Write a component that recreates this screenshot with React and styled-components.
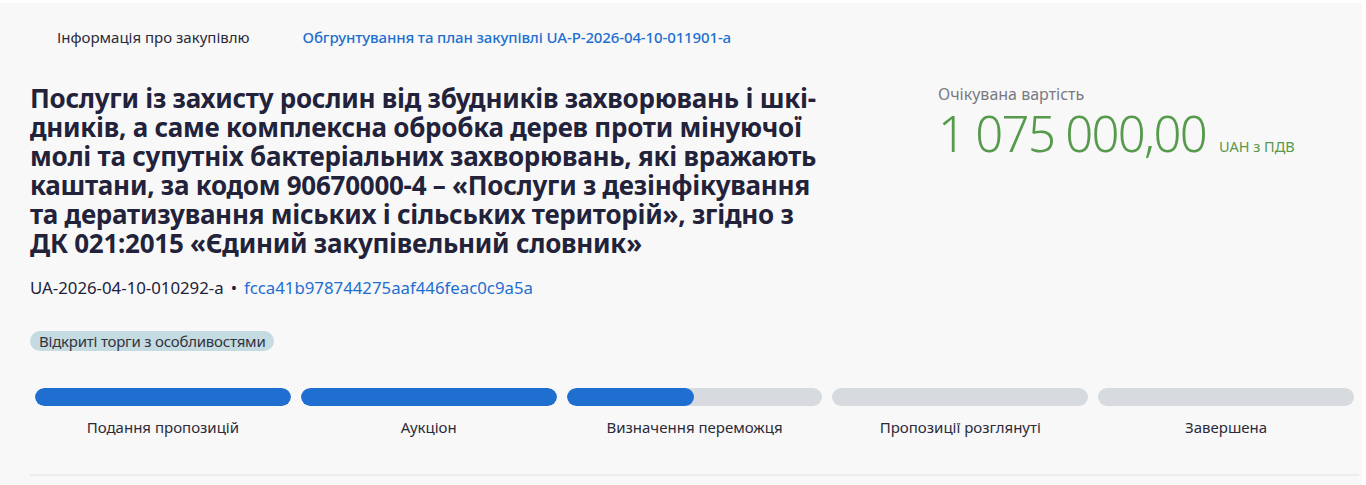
import React from "react";
import styled, { createGlobalStyle } from "styled-components";

const Global = createGlobalStyle`
  html, body { margin: 0; padding: 0; background: #ffffff; }
  body { font-family: "Noto Sans", "Open Sans", sans-serif; }
  * { box-sizing: border-box; }
`;

const Panel = styled.section`
  margin: 3px 4px 0 0;
  background: #f8f8f8;
  padding: 0 3px 0 30px;
  min-height: 482px;
`;

const Tabs = styled.nav`
  display: flex;
  align-items: center;
  height: 67px;
  padding-left: 27px;
  gap: 53px;
`;

const Tab = styled.a`
  font-size: 15px;
  text-decoration: none;
  color: ${(p) => (p.$link ? "#1e6fd0" : "#2b2b3a")};
  font-weight: ${(p) => (p.$link ? 500 : 400)};
  letter-spacing: ${(p) => (p.$link ? "-0.12px" : "0")};
  cursor: pointer;
`;

const Head = styled.div`
  display: flex;
  align-items: flex-start;
  padding-top: 14px;
`;

const Main = styled.div`
  flex: 0 0 908px;
`;

const Title = styled.h1`
  margin: 0;
  font-size: 26px;
  line-height: 29px;
  font-weight: 700;
  letter-spacing: -0.26px;
  color: #22223a;
`;

const Ids = styled.div`
  margin-top: 18px;
  font-size: 16.8px;
  color: #22223a;
  display: flex;
  gap: 7px;
  align-items: center;
`;

const Dot = styled.span`
  color: #22223a;
`;

const IdLink = styled.a`
  color: #1e6fd0;
  text-decoration: none;
`;

const Badge = styled.span`
  display: inline-block;
  margin-top: 32px;
  background: #c4dbe2;
  color: #333340;
  font-size: 15px;
  letter-spacing: -0.22px;
  line-height: 20px;
  padding: 0 8px 0 9px;
  border-radius: 10px;
`;

const Price = styled.div``;

const PriceLabel = styled.div`
  font-size: 16px;
  color: #7a7a82;
  line-height: 18px;
  margin-top: 1px;
`;

const PriceRow = styled.div`
  display: flex;
  align-items: baseline;
  gap: 13px;
  color: #569a4c;
  margin-top: 2px;
`;

const Amount = styled.span`
  font-size: 49px;
  font-weight: 300;
  letter-spacing: -1.7px;
  line-height: 56px;
`;

const Currency = styled.span`
  font-size: 14.5px;
`;

const Steps = styled.div`
  display: grid;
  grid-template-columns: repeat(5, 1fr);
  margin-top: 36px;
  padding-bottom: 37px;
  border-bottom: 2px solid #ececec;
`;

const Step = styled.div`
  padding: 0 5px;
  display: flex;
  flex-direction: column;
  align-items: center;
`;

const Bar = styled.div`
  width: 100%;
  height: 18px;
  border-radius: 9px;
  background: #d7dadf;
  overflow: hidden;
`;

const Fill = styled.div`
  height: 100%;
  background: #1f6fd1;
  border-radius: 9px;
`;

const StepLabel = styled.div`
  margin-top: 11px;
  font-size: 15px;
  color: #2b2b3a;
  line-height: 20px;
`;

const steps = [
  { label: "Подання пропозицій", fill: 100 },
  { label: "Аукціон", fill: 100 },
  { label: "Визначення переможця", fill: 50 },
  { label: "Пропозиції розглянуті", fill: 0 },
  { label: "Завершена", fill: 0 },
];

export default function App() {
  return (
    <>
      <Global />
      <Panel>
        <Tabs>
          <Tab>Інформація про закупівлю</Tab>
          <Tab $link>Обгрунтування та план закупівлі UA-P-2026-04-10-011901-a</Tab>
        </Tabs>
        <Head>
          <Main>
            <Title>
              Послуги із захисту рослин від збудників захворювань і шкі-
              <br />
              дників, а саме комплексна обробка дерев проти мінуючої
              <br />
              молі та супутніх бактеріальних захворювань, які вражають
              <br />
              каштани, за кодом 90670000-4 – «Послуги з дезінфікування
              <br />
              та дератизування міських і сільських територій», згідно з
              <br />
              ДК 021:2015 «Єдиний закупівельний словник»
            </Title>
            <Ids>
              <span>UA-2026-04-10-010292-a</span>
              <Dot>•</Dot>
              <IdLink>fcca41b978744275aaf446feac0c9a5a</IdLink>
            </Ids>
            <Badge>Відкриті торги з особливостями</Badge>
          </Main>
          <Price>
            <PriceLabel>Очікувана вартість</PriceLabel>
            <PriceRow>
              <Amount>1 075 000,00</Amount>
              <Currency>UAH з ПДВ</Currency>
            </PriceRow>
          </Price>
        </Head>
        <Steps>
          {steps.map((s) => (
            <Step key={s.label}>
              <Bar>
                <Fill style={{ width: `${s.fill}%` }} />
              </Bar>
              <StepLabel>{s.label}</StepLabel>
            </Step>
          ))}
        </Steps>
      </Panel>
    </>
  );
}
